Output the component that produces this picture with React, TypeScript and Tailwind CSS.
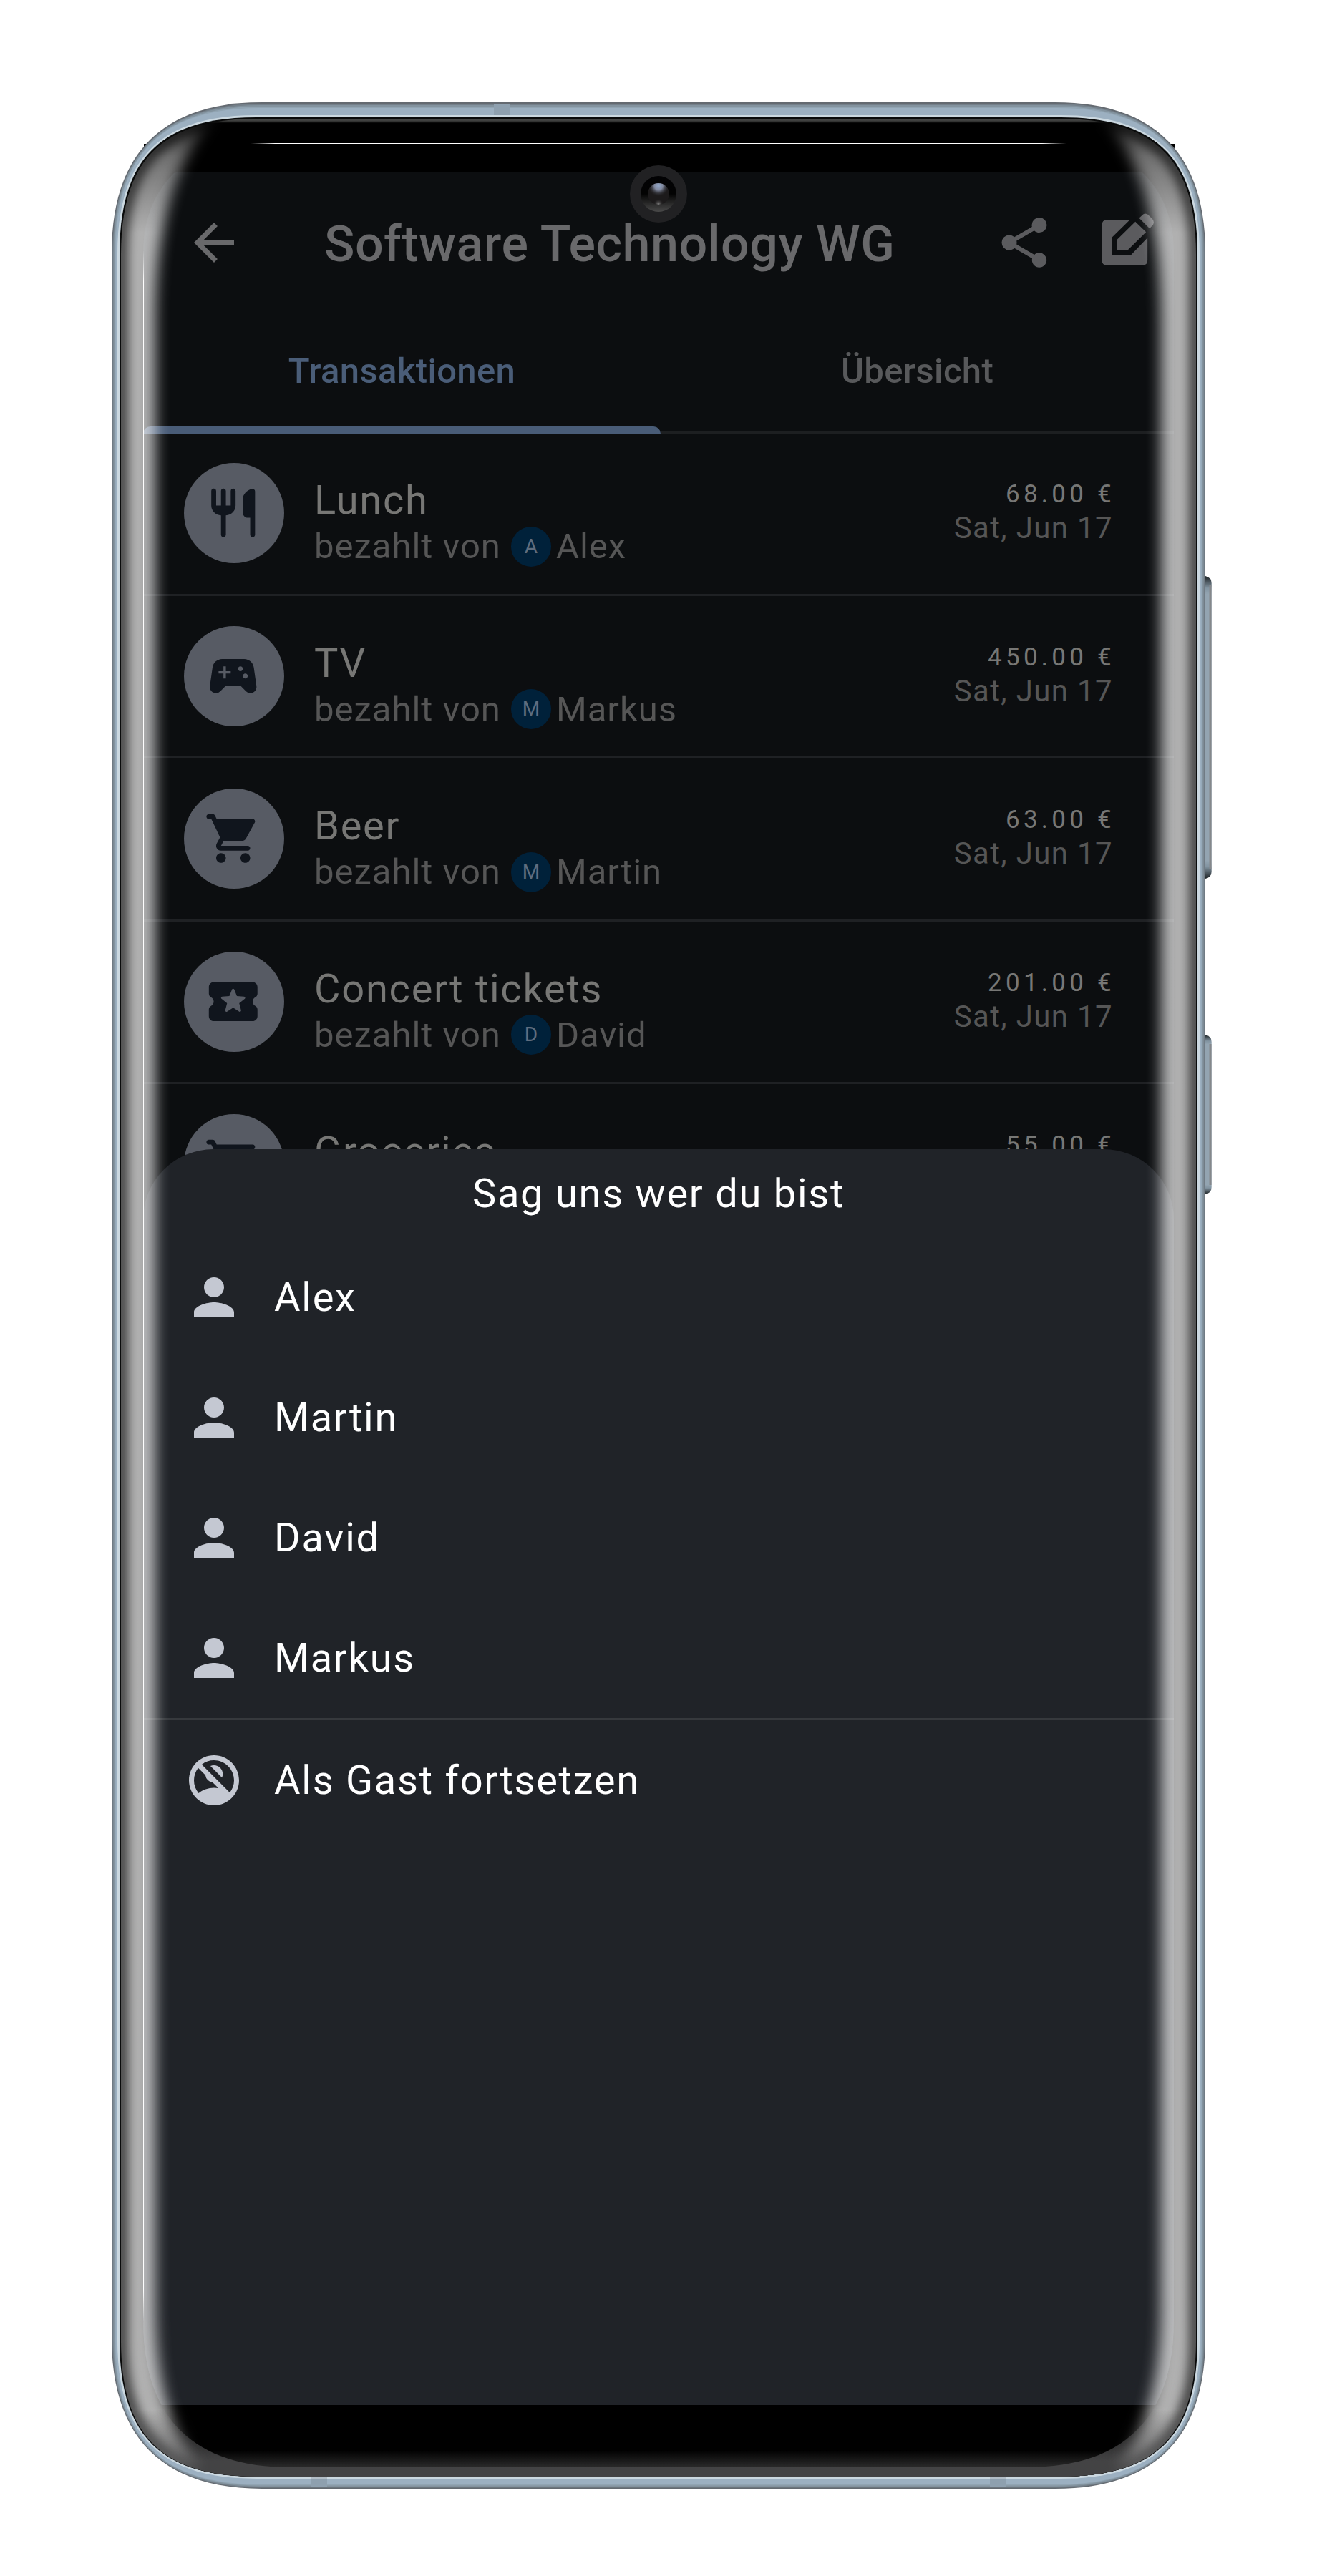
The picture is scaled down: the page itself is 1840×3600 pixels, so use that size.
import type { ReactNode } from "react";
import { MdArrowBack, MdNoAccounts, MdPerson } from "react-icons/md";

const FOOD =
  "M16 6v6c0 1.1.9 2 2 2h1v7c0 .55.45 1 1 1s1-.45 1-1V3.13c0-.65-.61-1.13-1.24-.98C17.6 2.68 16 4.51 16 6zm-5 3H9V3c0-.55-.45-1-1-1s-1 .45-1 1v6H5V3c0-.55-.45-1-1-1s-1 .45-1 1v6c0 2.21 1.79 4 4 4v8c0 .55.45 1 1 1s1-.45 1-1v-8c2.21 0 4-1.79 4-4V3c0-.55-.45-1-1-1s-1 .45-1 1v6z";
const GAME =
  "M21.58,16.09l-1.09-7.66C20.21,6.46,18.52,5,16.53,5H7.47C5.48,5,3.79,6.46,3.51,8.43l-1.09,7.66C2.2,17.63,3.39,19,4.94,19h0c0.68,0,1.32-0.27,1.8-0.75L9,16h6l2.25,2.25c0.48,0.48,1.13,0.75,1.8,0.75h0C20.61,19,21.8,17.63,21.58,16.09z M11,11H9v2H8v-2H6v-1h2V8h1v2h2V11z M15,10c-0.55,0-1-0.45-1-1c0-0.55,0.45-1,1-1s1,0.45,1,1C16,9.55,15.55,10,15,10z M17,13c-0.55,0-1-0.45-1-1c0-0.55,0.45-1,1-1s1,0.45,1,1C18,12.55,17.55,13,17,13z";
const CART =
  "M7 18c-1.1 0-1.99.9-1.99 2S5.9 22 7 22s2-.9 2-2-.9-2-2-2zM1 3c0 .55.45 1 1 1h1l3.6 7.59-1.35 2.44C4.52 15.37 5.48 17 7 17h11c.55 0 1-.45 1-1s-.45-1-1-1H7l1.1-2h7.45c.75 0 1.41-.41 1.75-1.03l3.58-6.49c.37-.66-.11-1.48-.87-1.48H5.21l-.67-1.43c-.16-.35-.52-.57-.9-.57H2c-.55 0-1 .45-1 1zm16 15c-1.1 0-1.99.9-1.99 2s.89 2 1.99 2 2-.9 2-2-.9-2-2-2z";
const TICKET =
  "M20.01 12c0-.76.43-1.42 1.06-1.76.56-.3.93-.86.93-1.5V6c0-1.1-.9-2-2-2H4c-1.1 0-1.99.89-1.99 2v2.74c0 .64.37 1.19.92 1.5.64.34 1.07 1 1.07 1.76s-.43 1.43-1.07 1.76c-.55.3-.93.86-.93 1.5V18c0 1.1.9 2 2 2h16c1.1 0 2-.9 2-2v-2.74c0-.64-.37-1.2-.93-1.5-.63-.34-1.06-1-1.06-1.76zm-5.5 4.1L12 14.5l-2.5 1.61c-.38.24-.87-.11-.75-.55l.75-2.88-2.3-1.88c-.35-.29-.17-.86.29-.89l2.96-.17 1.08-2.75c.17-.42.77-.42.93 0l1.08 2.76 2.96.17c.45.03.64.6.29.89l-2.3 1.88.76 2.86c.12.45-.37.8-.74.55z";

type ExpenseData = { title: string; by?: string; amount: string; date?: string; icon: string };

const expenses: ExpenseData[] = [
  { title: "Lunch", by: "Alex", amount: "68.00 €", date: "Sat, Jun 17", icon: FOOD },
  { title: "TV", by: "Markus", amount: "450.00 €", date: "Sat, Jun 17", icon: GAME },
  { title: "Beer", by: "Martin", amount: "63.00 €", date: "Sat, Jun 17", icon: CART },
  { title: "Concert tickets", by: "David", amount: "201.00 €", date: "Sat, Jun 17", icon: TICKET },
  { title: "Groceries", amount: "55.00 €", icon: CART },
];

const members = ["Alex", "Martin", "David", "Markus"];

// Rectangle whose corners are softer than circular arcs; r is the corner extent, k the curve tension.
function soft(x0: number, y0: number, x1: number, y1: number, r: number, k: number) {
  const h = r * (1 - k);
  return (
    `M${x0} ${y0 + r}C${x0} ${y0 + h} ${x0 + h} ${y0} ${x0 + r} ${y0}` +
    `H${x1 - r}C${x1 - h} ${y0} ${x1} ${y0 + h} ${x1} ${y0 + r}` +
    `V${y1 - r}C${x1} ${y1 - h} ${x1 - h} ${y1} ${x1 - r} ${y1}` +
    `H${x0 + r}C${x0 + h} ${y1} ${x0} ${y1 - h} ${x0} ${y1 - r}Z`
  );
}

const INNER = soft(169, 166, 1671, 3461, 190, 0.7);
const GLASS = soft(200, 100, 1640, 3448, 205, 0.66);
const CORE =
  "M217 450C217 310 243 225 305 150V60H1535V150C1597 225 1622 310 1622 450V3220C1622 3320 1606 3390 1562 3450V3540H277V3450C233 3390 217 3320 217 3220Z";

const rim: [string, string][] = [
  ["#646a71", soft(156, 143, 1684, 3478, 210, 0.66)],
  ["#74808a", soft(157.2, 145, 1682.8, 3476.6, 208, 0.66)],
  ["#83939f", soft(158.5, 147, 1681.5, 3475, 206, 0.67)],
  ["#91a4b2", soft(160, 149, 1680, 3473.5, 204, 0.67)],
  ["#9cb0c1", soft(161.5, 151, 1678.5, 3472, 202, 0.68)],
  ["#cbd8e0", soft(164, 161, 1676, 3464, 194, 0.69)],
  ["#0a0b0b", soft(167, 164, 1673, 3461, 191, 0.7)],
];

function PhoneBody() {
  return (
    <svg className="absolute inset-0" width="1840" height="3600" viewBox="0 0 1840 3600">
      <defs>
        <linearGradient id="btn" x1="0" y1="0" x2="0" y2="1">
          <stop offset="0" stopColor="#1c2124" />
          <stop offset="0.04" stopColor="#8294a1" />
          <stop offset="0.06" stopColor="#93a4b1" />
          <stop offset="0.94" stopColor="#93a4b1" />
          <stop offset="0.96" stopColor="#8294a1" />
          <stop offset="1" stopColor="#1c2124" />
        </linearGradient>
        <linearGradient id="chin" gradientUnits="userSpaceOnUse" x1="0" y1="3424" x2="0" y2="3450">
          <stop offset="0" stopColor="#000" />
          <stop offset="1" stopColor="#2e2e2e" />
        </linearGradient>
        <linearGradient id="lip" gradientUnits="userSpaceOnUse" x1="0" y1="3360" x2="0" y2="3440">
          <stop offset="0" stopColor="#434344" stopOpacity="0" />
          <stop offset="1" stopColor="#434344" />
        </linearGradient>
        <linearGradient id="brow" gradientUnits="userSpaceOnUse" x1="0" y1="166" x2="0" y2="172">
          <stop offset="0" stopColor="#4b4c4b" />
          <stop offset="0.5" stopColor="#3c3d3c" />
          <stop offset="1" stopColor="#000" />
        </linearGradient>
        <clipPath id="innerBody">
          <path d={INNER} />
        </clipPath>
      </defs>
      <rect x="201" y="201" width="1440" height="80" fill="#000" />
      <path d="M1683 805h1q8.700 2 8.700 10v403q0 8-8.700 10h-1z" fill="url(#btn)" />
      <path d="M1683 1446h1q8.700 2 8.700 10v203q0 8-8.700 10h-1z" fill="url(#btn)" />
      <path d="M1691 818v397M1691 1459v197" stroke="#85888b" strokeWidth="3" />
      {rim.map(([fill, d]) => (
        <path key={d} d={d} fill={fill} />
      ))}
      <path d="M690 146h22v15h-22zM435 3461h22v14h-22zM1383 3461h22v14h-22z" fill="#8ea0af" />
      <path d="M435 3461h22v3h-22zM1383 3461h22v3h-22z" fill="#b2bdc6" />
      <g clipPath="url(#innerBody)">
        <rect x="160" y="160" width="1520" height="3310" fill="#000" />
        <path d={INNER} fill="none" stroke="url(#brow)" strokeWidth="12" />
        <rect x="160" y="3424" width="1520" height="40" fill="url(#chin)" />
        <path d={`${GLASS}M160 3300H1680V3470H160Z`} fillRule="evenodd" fill="url(#lip)" />
      </g>
    </svg>
  );
}

// Curved-glass reflections, punch-hole camera and highlight lines painted over the display.
function GlassOverlay() {
  return (
    <svg className="pointer-events-none absolute inset-0" width="1840" height="3600" viewBox="0 0 1840 3600">
      <defs>
        <filter id="softCore" filterUnits="userSpaceOnUse" x="0" y="0" width="1840" height="3600">
          <feGaussianBlur stdDeviation="10" />
        </filter>
        <filter id="softRim" filterUnits="userSpaceOnUse" x="0" y="0" width="1840" height="3600">
          <feGaussianBlur stdDeviation="7" />
        </filter>
        <linearGradient id="vfade" gradientUnits="userSpaceOnUse" x1="0" y1="160" x2="0" y2="3460">
          <stop offset="0" stopColor="#fff" stopOpacity="0.15" />
          <stop offset="0.018" stopColor="#fff" stopOpacity="0.44" />
          <stop offset="0.05" stopColor="#fff" stopOpacity="0.69" />
          <stop offset="0.972" stopColor="#fff" stopOpacity="0.69" />
          <stop offset="0.99" stopColor="#fff" stopOpacity="0.35" />
          <stop offset="1" stopColor="#fff" stopOpacity="0.1" />
        </linearGradient>
        <mask id="edge" maskUnits="userSpaceOnUse" x="0" y="0" width="1840" height="3600">
          <path d={INNER} fill="#fff" />
          <path d={INNER} fill="none" stroke="#000" strokeOpacity="0.6" strokeWidth="20" filter="url(#softRim)" />
          <path d={CORE} fill="#000" filter="url(#softCore)" />
        </mask>
        <linearGradient id="topLine" gradientUnits="userSpaceOnUse" x1="350" y1="0" x2="1490" y2="0">
          <stop offset="0" stopColor="#fff" stopOpacity="0" />
          <stop offset="0.03" stopColor="#fff" />
          <stop offset="0.97" stopColor="#fff" />
          <stop offset="1" stopColor="#fff" stopOpacity="0" />
        </linearGradient>
        <linearGradient id="sideLine" gradientUnits="userSpaceOnUse" x1="0" y1="350" x2="0" y2="3244">
          <stop offset="0" stopColor="#fff" stopOpacity="0" />
          <stop offset="0.015" stopColor="#fff" />
          <stop offset="0.985" stopColor="#fff" />
          <stop offset="1" stopColor="#fff" stopOpacity="0" />
        </linearGradient>
        <linearGradient id="ring" x1="0" y1="0" x2="0" y2="1">
          <stop offset="0" stopColor="#020204" />
          <stop offset="0.5" stopColor="#030303" />
          <stop offset="1" stopColor="#4a4a4a" />
        </linearGradient>
        <radialGradient id="sky" cx="0.5" cy="0.12" r="0.5">
          <stop offset="0" stopColor="#92a7c8" />
          <stop offset="0.4" stopColor="#7f879d" />
          <stop offset="1" stopColor="#1c1a1b" stopOpacity="0" />
        </radialGradient>
        <radialGradient id="glint" cx="0.5" cy="0.97" r="0.24">
          <stop offset="0" stopColor="#858585" />
          <stop offset="1" stopColor="#1c1a1b" stopOpacity="0" />
        </radialGradient>
      </defs>
      <rect x="160" y="160" width="1520" height="3304" fill="url(#vfade)" mask="url(#edge)" />
      <rect x="350" y="200" width="1140" height="1" fill="url(#topLine)" />
      <rect x="200" y="350" width="1" height="2894" fill="url(#sideLine)" />
      <circle cx="920" cy="271" r="40" fill="#212123" />
      <circle cx="920" cy="271" r="25" fill="url(#ring)" />
      <circle cx="920" cy="271" r="15" fill="#1c1a1b" />
      <circle cx="920" cy="271" r="15" fill="url(#sky)" />
      <circle cx="920" cy="271" r="15" fill="url(#glint)" />
    </svg>
  );
}

function ShareIcon() {
  return (
    <svg width="84" height="84" viewBox="0 0 24 24" fill="currentColor">
      <path d="M18,16.08C17.24,16.08 16.56,16.38 16.04,16.85L8.91,12.7C8.96,12.47 9,12.24 9,12C9,11.76 8.96,11.53 8.91,11.3L15.96,7.19C16.5,7.69 17.21,8 18,8A3,3 0 0,0 21,5A3,3 0 0,0 18,2A3,3 0 0,0 15,5C15,5.24 15.04,5.47 15.09,5.7L8.04,9.81C7.5,9.31 6.79,9 6,9A3,3 0 0,0 3,12A3,3 0 0,0 6,15C6.79,15 7.5,14.69 8.04,14.19L15.16,18.34C15.11,18.55 15.08,18.77 15.08,19C15.08,20.61 16.39,21.91 18,21.91C19.61,21.91 20.92,20.61 20.92,19A2.92,2.92 0 0,0 18,16.08Z" />
    </svg>
  );
}

function EditIcon() {
  return (
    <svg width="84" height="84" viewBox="0 0 252 252" fill="currentColor">
      <path d="M53 30.500H148.500L73.500 104V180H151.500L222.500 106V200Q222.500 220.500 202 220.500H52Q31.500 220.500 31.500 200V52Q31.500 30.500 53 30.500Z" />
      <path d="M171.500 38L216.500 82L140.500 157H94.500V114Z" />
      <path d="M187.500 23.500L200 11Q212 -1.500 225 9L243 27Q254 40 244 53L231.500 66.500Z" />
    </svg>
  );
}

function Expense({ title, by, amount, date, icon }: ExpenseData) {
  return (
    <li className="flex h-[227.5px] shrink-0 items-start border-b-[3.5px] border-[#1f2124] pr-[84px] pl-[57px]">
      <span className="mt-[42px] flex size-[140px] shrink-0 items-center justify-center rounded-full bg-[#575b64] pr-[2px] text-[#10151d]">
        <svg width="81.500" height="81.500" viewBox="0 0 24 24" fill="currentColor">
          <path d={icon} fillRule="evenodd" />
        </svg>
      </span>
      <div className="ml-[42px] flex-1 pt-[64px]">
        <p className="text-[56px] leading-[60px] tracking-[1.75px] text-[#777775]">{title}</p>
        {by && (
          <p className="flex h-[69px] items-center text-[49px] leading-[69px] tracking-[1px] text-[#565656]">
            <span>bezahlt von</span>
            <span className="ml-[14px] flex size-[56px] items-center justify-center rounded-full bg-[#00213a] text-[28px] leading-none tracking-normal text-[#5f6d7e]">
              {by[0]}
            </span>
            <span className="ml-[7px]">{by}</span>
          </p>
        )}
      </div>
      <div className="pt-[63px] text-right">
        <p className="-mr-[2px] text-[35px] leading-[46px] tracking-[5.25px] text-[#777775]">{amount}</p>
        {date && <p className="mr-[1px] text-[42px] leading-[48px] tracking-[1.35px] text-[#565656]">{date}</p>}
      </div>
    </li>
  );
}

function SheetItem({ icon, label }: { icon: ReactNode; label: string }) {
  return (
    <li className="flex h-[168px] items-center gap-[42px] pl-[57px]">
      <span className="text-[#c4c8d2]">{icon}</span>
      <span className="text-[56px] leading-[84px] tracking-[1.75px] text-white">{label}</span>
    </li>
  );
}

export default function App() {
  return (
    <div className="relative h-[3600px] w-[1840px] overflow-hidden bg-white font-['Roboto',sans-serif]">
      <PhoneBody />
      <main className="relative mt-[201px] ml-[200px] h-[3247px] w-[1440px] pt-[40px] [clip-path:path('M0,150C0,62,62,0,150,0H1290C1378,0,1440,62,1440,150V3042C1440,3177,1370,3247,1235,3247H205C70,3247,0,3177,0,3042Z')]">
        <div className="relative flex h-[3120px] flex-col overflow-hidden bg-[#0c0e10]">
          <header className="flex h-[196px] shrink-0 items-center pr-[27px] pl-[57px]">
            <MdArrowBack size={84} className="text-[#69696b]" />
            <h1 className="ml-[112px] flex-1 pt-[3px] text-[70px] leading-[98px] font-medium tracking-[0.5px] text-[#69696b]">
              Software Technology WG
            </h1>
            <div className="flex items-center gap-[56px] text-[#5b5b5e]">
              <ShareIcon />
              <EditIcon />
            </div>
          </header>
          <nav className="flex h-[170px] shrink-0 text-[49px] leading-[70px] font-medium tracking-[0.35px]">
            <div className="flex flex-1 flex-col items-center justify-end text-[#4a5d78]">
              <span className="mb-[42px]">Transaktionen</span>
              <span className="h-[11px] w-[723px] rounded-t-[10px] bg-[#495c77]" />
            </div>
            <div className="flex flex-1 flex-col items-center justify-end border-b-[4px] border-[#1d1f21] text-[#58595b]">
              <span className="mb-[49px]">Übersicht</span>
            </div>
          </nav>
          <ul className="-mt-[2px] flex flex-col">
            {expenses.map((e) => (
              <Expense key={e.title} {...e} />
            ))}
          </ul>
          <section className="absolute inset-x-0 top-[1365px] bottom-0 rounded-t-[98px] bg-[#202328] pt-[20px]">
            <h2 className="mb-[19px] text-center text-[56px] leading-[84px] font-normal tracking-[1.75px] text-white">
              Sag uns wer du bist
            </h2>
            <ul>
              {members.map((name) => (
                <SheetItem key={name} label={name} icon={<MdPerson size={84} />} />
              ))}
            </ul>
            <ul className="border-t-[3.5px] border-[#36393d]">
              <SheetItem label="Als Gast fortsetzen" icon={<MdNoAccounts size={84} />} />
            </ul>
          </section>
        </div>
      </main>
      <GlassOverlay />
    </div>
  );
}
